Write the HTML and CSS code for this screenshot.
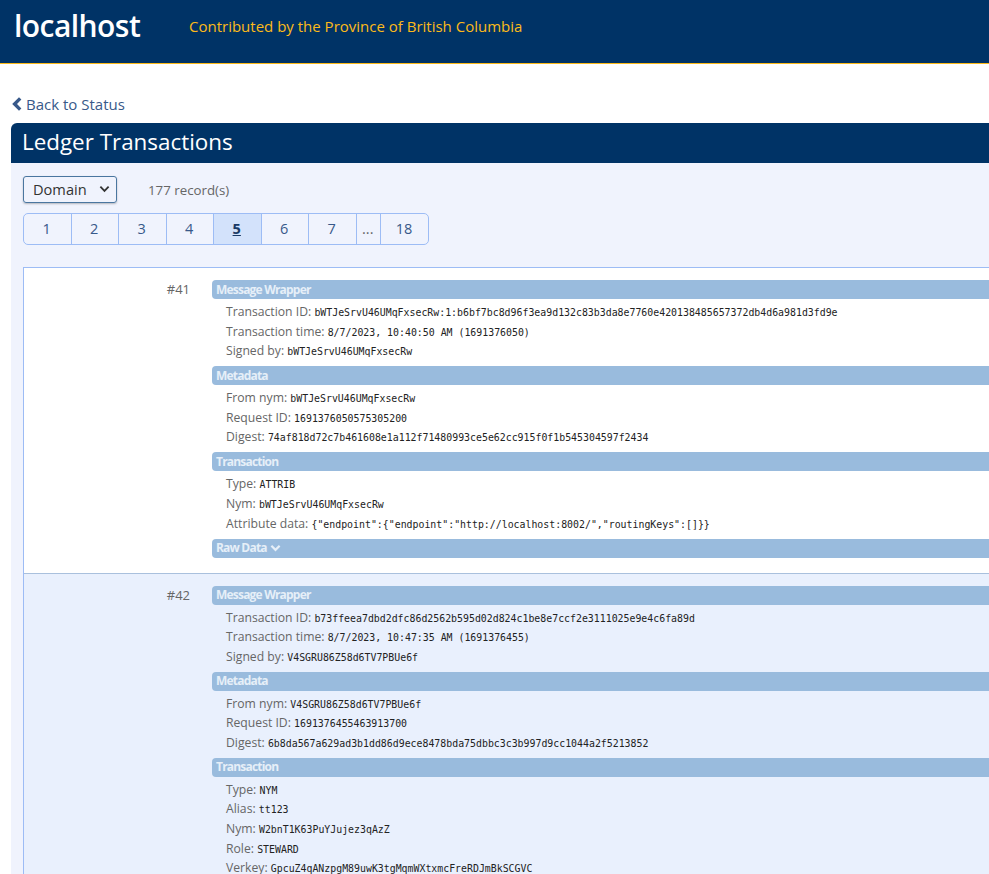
FILE: index.html
```html
<!DOCTYPE html>
<html lang="en">
<head>
  <meta charset="UTF-8">
  <title>Ledger Transactions</title>
  <link rel="stylesheet" href="styles.css">
</head>
<body>
  <header class="topbar">
    <span class="brand">localhost</span>
    <span class="tagline">Contributed by the Province of British Columbia</span>
  </header>
  <main class="content">
    <a class="back" href="#">
      <svg class="back-icon" viewBox="0 0 10 14"><path d="M8.2 1.4 2.6 7l5.6 5.6" fill="none" stroke="currentColor" stroke-width="3.4"/></svg>
      Back to Status
    </a>
    <section class="panel">
      <h1 class="panel-title">Ledger Transactions</h1>
      <div class="panel-body">
        <div class="filter">
          <div class="select">
            Domain
            <svg class="select-icon" viewBox="0 0 12 8"><path d="M1.5 1.5 6 6l4.5-4.5" fill="none" stroke="currentColor" stroke-width="2"/></svg>
          </div>
          <span class="count">177 record(s)</span>
        </div>
        <nav class="pager">
          <a class="page">1</a>
          <a class="page">2</a>
          <a class="page">3</a>
          <a class="page">4</a>
          <a class="page active">5</a>
          <a class="page">6</a>
          <a class="page">7</a>
          <a class="page gap">...</a>
          <a class="page last">18</a>
        </nav>

        <div class="ledger">
          <article class="txn">
            <div class="txn-num">#41</div>
            <div class="txn-detail">
              <h2 class="sec-head">Message Wrapper</h2>
              <div class="fields">
                <div class="field">Transaction ID: <code>bWTJeSrvU46UMqFxsecRw:1:b6bf7bc8d96f3ea9d132c83b3da8e7760e420138485657372db4d6a981d3fd9e</code></div>
                <div class="field">Transaction time: <code>8/7/2023, 10:40:50 AM (1691376050)</code></div>
                <div class="field">Signed by: <code>bWTJeSrvU46UMqFxsecRw</code></div>
              </div>
              <h2 class="sec-head">Metadata</h2>
              <div class="fields">
                <div class="field">From nym: <code>bWTJeSrvU46UMqFxsecRw</code></div>
                <div class="field">Request ID: <code>1691376050575305200</code></div>
                <div class="field">Digest: <code>74af818d72c7b461608e1a112f71480993ce5e62cc915f0f1b545304597f2434</code></div>
              </div>
              <h2 class="sec-head">Transaction</h2>
              <div class="fields">
                <div class="field">Type: <code>ATTRIB</code></div>
                <div class="field">Nym: <code>bWTJeSrvU46UMqFxsecRw</code></div>
                <div class="field">Attribute data: <code>{"endpoint":{"endpoint":"http://localhost:8002/","routingKeys":[]}}</code></div>
              </div>
              <h2 class="sec-head">Raw Data
                <svg class="raw-icon" viewBox="0 0 12 8"><path d="M1.5 1.5 6 6l4.5-4.5" fill="none" stroke="currentColor" stroke-width="2.4"/></svg>
              </h2>
            </div>
          </article>

          <article class="txn alt">
            <div class="txn-num">#42</div>
            <div class="txn-detail">
              <h2 class="sec-head">Message Wrapper</h2>
              <div class="fields">
                <div class="field">Transaction ID: <code>b73ffeea7dbd2dfc86d2562b595d02d824c1be8e7ccf2e3111025e9e4c6fa89d</code></div>
                <div class="field">Transaction time: <code>8/7/2023, 10:47:35 AM (1691376455)</code></div>
                <div class="field">Signed by: <code>V4SGRU86Z58d6TV7PBUe6f</code></div>
              </div>
              <h2 class="sec-head">Metadata</h2>
              <div class="fields">
                <div class="field">From nym: <code>V4SGRU86Z58d6TV7PBUe6f</code></div>
                <div class="field">Request ID: <code>1691376455463913700</code></div>
                <div class="field">Digest: <code>6b8da567a629ad3b1dd86d9ece8478bda75dbbc3c3b997d9cc1044a2f5213852</code></div>
              </div>
              <h2 class="sec-head">Transaction</h2>
              <div class="fields">
                <div class="field">Type: <code>NYM</code></div>
                <div class="field">Alias: <code>tt123</code></div>
                <div class="field">Nym: <code>W2bnT1K63PuYJujez3qAzZ</code></div>
                <div class="field">Role: <code>STEWARD</code></div>
                <div class="field">Verkey: <code>GpcuZ4qANzpgM89uwK3tgMqmWXtxmcFreRDJmBkSCGVC</code></div>
              </div>
            </div>
          </article>
        </div>
      </div>
    </section>
  </main>
</body>
</html>
```

FILE: styles.css
```css
html {
  height: 100%;
  overflow: hidden;
}
body {
  margin: 0;
  background: #fff;
  color: #666;
  font-family: "Open Sans", "Noto Sans", sans-serif;
  font-size: 12.2px;
}
.topbar {
  display: flex;
  align-items: flex-start;
  height: 63px;
  background: #003366;
  border-bottom: 1px solid #fcba19;
}
.brand {
  width: 189px;
  padding: 6px 0 0 14px;
  box-sizing: border-box;
  color: #fff;
  font-size: 30px;
  font-weight: 600;
  letter-spacing: -0.55px;
  line-height: 40px;
}
.tagline {
  padding-top: 15px;
  color: #fcba19;
  font-size: 15px;
  line-height: 22px;
}
.content {
  width: 1120px;
  padding: 29px 0 0 11px;
}
.back {
  display: flex;
  align-items: center;
  gap: 4px;
  height: 22px;
  margin: 0 0 8px 1px;
  color: #38598a;
  font-size: 15px;
  text-decoration: none;
}
.back-icon {
  width: 10px;
  height: 14px;
}
.panel {
  border-radius: 6px 6px 0 0;
  overflow: hidden;
}
.panel-title {
  height: 40px;
  margin: 0;
  padding-left: 11px;
  background: #003366;
  color: #fff;
  font-size: 22.4px;
  font-weight: 400;
  line-height: 38px;
}
.panel-body {
  padding: 13px 0 0 12px;
  background: #f0f3fd;
}
.filter {
  display: flex;
  align-items: center;
}
.select {
  display: flex;
  align-items: center;
  justify-content: space-between;
  box-sizing: border-box;
  width: 94px;
  height: 27px;
  padding: 0 6px 1px 9px;
  border: 1px solid #4a76a0;
  border-radius: 3px;
  box-shadow: 0 1px 2px rgba(0, 0, 0, 0.25);
  color: #333;
  font-size: 14.6px;
}
.select-icon {
  width: 11px;
  height: 8px;
}
.count {
  margin-left: 31px;
  color: #666;
  font-size: 13.3px;
  font-weight: 500;
}
.pager {
  display: flex;
  width: 406px;
  height: 32px;
  box-sizing: border-box;
  margin: 10px 0 22px;
  border: 1px solid #9dbcf5;
  border-radius: 5px;
  overflow: hidden;
}
.page {
  display: flex;
  flex: 0 0 47.5px;
  align-items: center;
  justify-content: center;
  padding: 0 1px 2px 0;
  border-right: 1px solid #9dbcf5;
  box-sizing: border-box;
  color: #38598a;
  font-size: 14.5px;
}
.page.active {
  background: #d3e2fb;
  color: #1a3a66;
  font-weight: 700;
  text-decoration: underline;
}
.page.gap {
  flex-basis: 24.5px;
  color: #666;
}
.page.last {
  flex: 1;
  border-right: 0;
}
.ledger {
  border-top: 1px solid #9dbcf5;
  border-left: 1px solid #9dbcf5;
}
.txn {
  display: flex;
  padding: 12px 0 15px;
  background: #fff;
  border-bottom: 1px solid #a9c0dd;
}
.txn.alt {
  background: #e9f0fd;
  border-bottom: 0;
}
.txn-num {
  flex: 0 0 188px;
  padding-right: 22px;
  box-sizing: border-box;
  font-size: 13px;
  line-height: 19px;
  text-align: right;
}
.txn-detail {
  flex: 1;
}
.sec-head {
  display: flex;
  align-items: center;
  gap: 3px;
  box-sizing: border-box;
  height: 19px;
  margin: 0;
  padding: 0 0 1px 4px;
  background: #99bbdd;
  border-radius: 4px 0 0 4px;
  color: #e6eff8;
  font-size: 12px;
  font-weight: 700;
  letter-spacing: -0.8px;
}
.raw-icon {
  width: 11px;
  height: 8px;
}
.fields {
  padding: 3px 0 5.4px 14px;
}
.field {
  height: 19.6px;
  line-height: 19.6px;
  white-space: nowrap;
}
code {
  color: #222;
  font-family: "DejaVu Sans Mono", "Liberation Mono", monospace;
  font-size: 9.88px;
}
```
